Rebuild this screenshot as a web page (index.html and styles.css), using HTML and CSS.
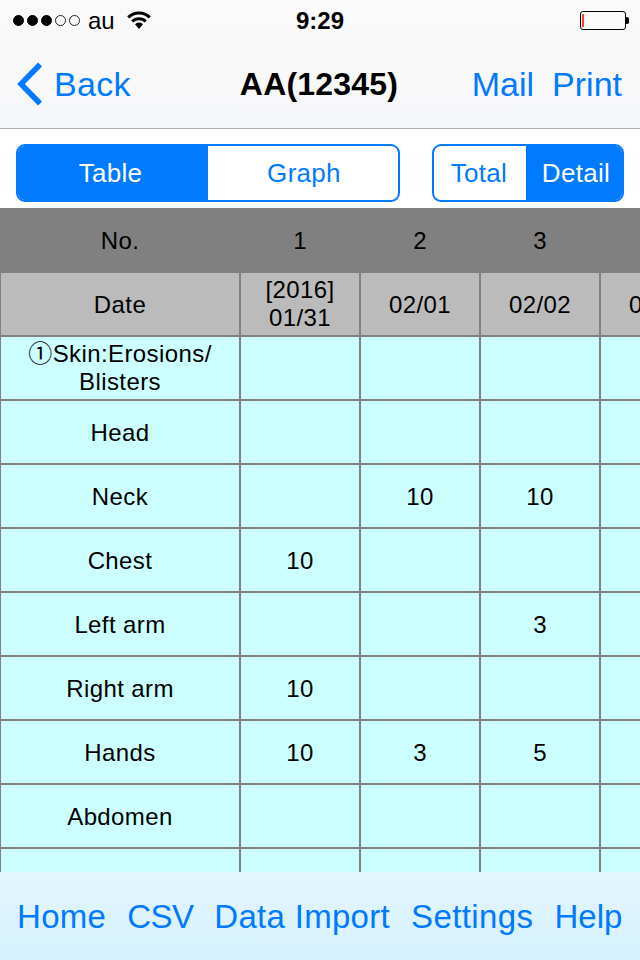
FILE: index.html
```html
<!DOCTYPE html>
<html lang="en">
<head>
<meta charset="utf-8">
<title>AA(12345)</title>
<link rel="stylesheet" href="styles.css">
</head>
<body>
<div class="app">
  <header class="top">
    <div class="status">
      <div class="carrier">
        <span class="dot on"></span><span class="dot on"></span><span class="dot on"></span><span class="dot"></span><span class="dot"></span>
        <span class="carrier-name">au</span>
        <svg class="wifi" width="24" height="18" viewBox="0 0 24 18"><path d="M1.2 6.4A15.4 15.4 0 0 1 22.8 6.4" class="arc"/><path d="M5.2 10.4A9.8 9.8 0 0 1 18.8 10.4" class="arc"/><path d="M8 13.2A5 5 0 0 1 12 11.6 5 5 0 0 1 16 13.2L12 18Z" class="wedge"/></svg>
      </div>
      <div class="time">9:29</div>
      <div class="battery"><div class="battery-body"><span class="battery-level"></span></div><span class="battery-nub"></span></div>
    </div>
    <nav class="nav">
      <div class="nav-left">
        <svg class="chevron" width="26" height="44" viewBox="0 0 26 44"><path d="M24 2.500 5 22 24 41.500"/></svg>
        <span>Back</span>
      </div>
      <div class="nav-title">AA(12345)</div>
      <div class="nav-right"><span>Mail</span><span>Print</span></div>
    </nav>
  </header>
  <div class="controls">
    <div class="seg seg-main">
      <div class="seg-item active table-tab">Table</div>
      <div class="seg-item graph-tab">Graph</div>
    </div>
    <div class="seg seg-side">
      <div class="seg-item total">Total</div>
      <div class="seg-item active detail">Detail</div>
    </div>
  </div>
  <main class="table-wrap">
    <div class="sheet">
      <div class="no first">No.</div><div class="no">1</div><div class="no">2</div><div class="no">3</div><div class="no">4</div>
      <div class="cell date first">Date</div><div class="cell date two">[2016]<br>01/31</div><div class="cell date">02/01</div><div class="cell date">02/02</div><div class="cell date">02/03</div>
      <div class="cell first two">①Skin:Erosions/<br>Blisters</div><div class="cell"></div><div class="cell"></div><div class="cell"></div><div class="cell"></div>
      <div class="cell first">Head</div><div class="cell"></div><div class="cell"></div><div class="cell"></div><div class="cell"></div>
      <div class="cell first">Neck</div><div class="cell"></div><div class="cell">10</div><div class="cell">10</div><div class="cell"></div>
      <div class="cell first">Chest</div><div class="cell">10</div><div class="cell"></div><div class="cell"></div><div class="cell"></div>
      <div class="cell first">Left arm</div><div class="cell"></div><div class="cell"></div><div class="cell">3</div><div class="cell"></div>
      <div class="cell first">Right arm</div><div class="cell">10</div><div class="cell"></div><div class="cell"></div><div class="cell"></div>
      <div class="cell first">Hands</div><div class="cell">10</div><div class="cell">3</div><div class="cell">5</div><div class="cell"></div>
      <div class="cell first">Abdomen</div><div class="cell"></div><div class="cell"></div><div class="cell"></div><div class="cell"></div>
      <div class="cell first">Genitals</div><div class="cell"></div><div class="cell"></div><div class="cell"></div><div class="cell"></div>
    </div>
  </main>
  <footer class="bottom">
    <span>Home</span><span class="tight">CSV</span><span>Data Import</span><span class="wide">Settings</span><span class="help">Help</span>
  </footer>
</div>
</body>
</html>
```
FILE: styles.css
```css
* { box-sizing: border-box; }
html, body { margin: 0; padding: 0; background: #fff; }
body { font-family: "Liberation Sans", Arial, "Noto Sans CJK JP", sans-serif; color: #000; }
.app { width: 640px; height: 960px; display: flex; flex-direction: column; overflow: hidden; }

.top { height: 129px; flex: none; background: linear-gradient(#fafafa, #f8f8f9 70%, #f5f7fb); border-bottom: 1px solid #b2b2b2; }
.status { height: 40px; display: grid; grid-template-columns: 1fr auto 1fr; align-items: center; padding: 1px 13px 0; }
.carrier { display: flex; align-items: center; }
.dot { width: 11px; height: 11px; border-radius: 50%; border: 1px solid #222; margin-right: 3px; }
.dot.on { background: #000; border-color: #000; }
.carrier-name { font-size: 24px; line-height: 28px; margin-left: 5px; }
.wifi { margin-left: 12px; margin-top: -2px; }
.arc { fill: none; stroke: #000; stroke-width: 3; }
.wedge { fill: #000; }
.time { font-size: 24px; font-weight: 700; line-height: 28px; }
.battery { justify-self: end; display: flex; align-items: center; margin-right: -2px; }
.battery-body { width: 46px; height: 19px; border: 1px solid #000; border-radius: 3px; padding: 2px 1px; }
.battery-level { display: block; width: 2px; height: 100%; background: #ff3b30; }
.battery-nub { width: 3px; height: 7px; background: #000; border-radius: 0 2px 2px 0; }

.nav { height: 88px; display: grid; grid-template-columns: 1fr auto 1fr; align-items: center; padding: 0 18px 0 16px; font-size: 34px; color: #007aff; }
.nav-left { display: flex; align-items: center; gap: 12px; letter-spacing: 0.3px; }
.chevron { fill: none; stroke: #007aff; stroke-width: 5.500; flex: none; }
.nav-title { font-size: 32px; font-weight: 700; color: #000; letter-spacing: 0.2px; }
.nav-right { display: flex; justify-content: flex-end; gap: 18px; }

.controls { height: 79px; flex: none; background: #fff; display: flex; justify-content: space-between; padding: 15px 16px 6px; }
.seg { height: 58px; display: flex; border: 2px solid #007aff; border-radius: 9px; overflow: hidden; font-size: 26px; letter-spacing: 0.3px; color: #007aff; background: #fff; }
.seg-main { width: 384px; }
.seg-side { width: 192px; }
.seg-item { display: flex; align-items: center; justify-content: center; }
.seg-item.active { background: #007aff; color: #fff; }
.seg-item.table-tab { flex: 0 0 190px; padding-right: 5px; }
.seg-item.graph-tab { flex: 0 0 190px; padding-left: 2px; }
.seg-item.total { flex: 0 0 92px; padding-right: 2px; }
.seg-item.detail { flex: 1; padding-left: 4px; }

.table-wrap { flex: 1; min-height: 0; overflow: hidden; }
.sheet { display: grid; grid-template-columns: 240px repeat(4, 120px); grid-auto-rows: 64px; width: 720px; font-size: 24px; line-height: 28px; letter-spacing: 0.4px; text-align: center; }
.no, .cell { display: flex; align-items: center; justify-content: center; padding-top: 2px; }
.no { background: #808080; }
.cell { background: #ccffff; border: 1px solid #808080; }
.cell.date { background: #bbbbbb; }
.cell.two { padding-top: 0; }

.bottom { height: 88px; flex: none; display: flex; align-items: center; gap: 21px; padding: 2px 0 0 17px; font-size: 33px; letter-spacing: 0.3px; white-space: nowrap; color: #007aff; background: linear-gradient(#e3f6ff, #d5f1ff); }
.bottom span { flex: none; }
.bottom .tight { letter-spacing: -0.6px; }
.bottom .wide { letter-spacing: 0.4px; }
.bottom .help { letter-spacing: 0; }
```
